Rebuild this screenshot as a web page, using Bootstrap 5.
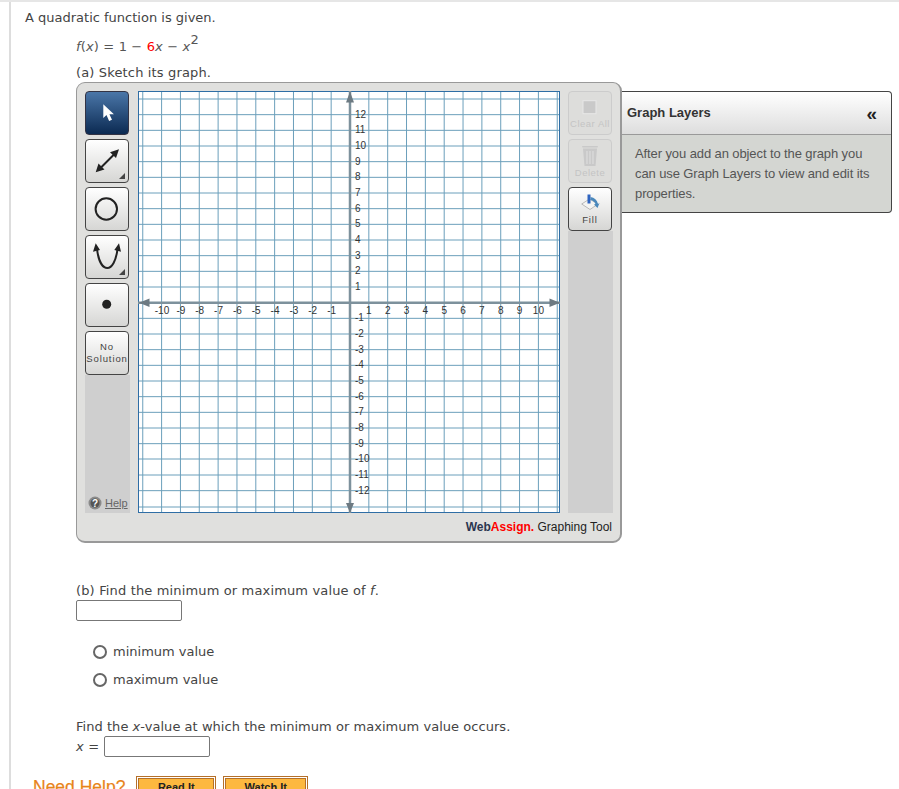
<!DOCTYPE html>
<html lang="en">
<head>
<meta charset="utf-8">
<title>Quadratic function</title>
<link href="https://cdn.jsdelivr.net/npm/bootstrap@5.3.0/dist/css/bootstrap.min.css" rel="stylesheet">
<style>
html,body{height:789px;overflow:hidden;background:#fff}
body{border-top:2px solid #e6e6e6;font-family:"DejaVu Sans",sans-serif;font-size:13px;color:#444}
.qpane{margin-left:9px;border-left:2px solid #ddd;height:800px;padding-left:14px}
.qline{margin:0;line-height:16px}
.qintro{padding-top:8px}
.qindent{margin-left:51px;letter-spacing:.15px}
.qformula{margin-top:10px;line-height:22px;color:#555}
.qformula sup{font-size:13px;top:-.55em;line-height:0}
.qred{color:#f00}
.qpart{margin-top:7px}
.gbox{width:546px;height:461px;margin-top:1px;padding:8px 8px 0 8px;background:#e0e0de;border:1px solid #999;border-width:1px 2px 2px 1px;border-radius:9px;flex:none;letter-spacing:0}
.gmain{height:422px}
.gcol{width:45px;flex:none}
.gfill{flex:1 1 auto;background:#cfcfcf}
.gbtn{width:44px;height:44px;padding:0;border:1px solid #444;border-radius:4px;background:linear-gradient(#fff,#d6d6d4);font-family:"Liberation Sans",sans-serif;font-size:9.5px;letter-spacing:.9px;line-height:12px;color:#444}
.gbtn:hover{background:linear-gradient(#fff,#d6d6d4);border-color:#444;color:#444}
.gbtn svg{display:block}
.gbtn-on,.gbtn-on:hover{background:linear-gradient(#4a76a8,#0b2a52);border-color:#334}
.gbtn-lab{padding-bottom:3px}
.gbtn-del{padding-bottom:2px}
.gbtn-off,.gbtn-off:disabled{border-color:#ccc;background:#dddddb;color:#c4c4c4;opacity:1;letter-spacing:.5px}
.gbtn-cap{white-space:nowrap;display:block;margin-top:-1px}
.ghelp{font-family:"Liberation Sans",sans-serif;font-size:11px;color:#666;padding:0 0 2px 3px;background:#cfcfcf;gap:3px}
.ghelp a{color:#666}
.gsvg{display:block;width:422px;height:422px;margin:0 8px;flex:none;background:#fff}
.gsvg text{font-family:"Liberation Sans",sans-serif;font-size:10px;fill:#333}
.gsvg .gl{stroke:#6b9fbb;stroke-width:1}
.gfoot{font-family:"Liberation Sans",sans-serif;font-size:12px;text-align:right;color:#222;line-height:16px;padding:6px 0 0 0}
.gfoot b{color:#2b3650}
.gfoot b i{color:#f00;font-style:normal}
.lpanel{width:270px;height:122px;margin-top:10px;border:1px solid #444;border-left:0;border-radius:0 4px 4px 0;background:#d4d6d2;font-family:"Liberation Sans",sans-serif;flex:none;letter-spacing:0}
.lhead{height:43px;padding:0 14px 0 5px;background:linear-gradient(#fff,#ddd);border-bottom:1px solid #999;font-size:13px;font-weight:700;color:#333;border-radius:0 4px 0 0}
.lchev{font-size:19px;color:#222;line-height:1}
.lbody{font-size:13px;letter-spacing:-.1px;line-height:20px;color:#555;padding:9px 12px 0 13px}
.qfind{margin-top:40px}
.qfield{display:block;width:106px;height:21px;border:1px solid #777;border-radius:2px;background:#fff}
.qfield-a{margin-top:1px}
.qopts{margin:17px 0 0 68px}
.qopt{height:28px;display:flex;align-items:center;gap:6px;margin:0}
.qradio{width:14px;height:14px;margin:0;border:2px solid #666;flex:none}
.qfindx{margin-top:25px;letter-spacing:.04px}
.qxrow{gap:5px;margin-top:1px}
.qhelp{margin:19px 0 0 8px;gap:11px}
.qhelp-t{font-family:"Liberation Sans",sans-serif;font-size:17.5px;color:#e8841a;line-height:22px;-webkit-text-stroke:.2px #e8841a}
.qhelp-x{margin-left:-4px}
.qhelp-b{width:auto;height:22px;padding:1px;border:1px solid #b5702a;border-radius:0;background:#fff;line-height:1}
.qhelp-b span{display:block;height:18px;border:1px solid #b5702a;background:#fdb83f;font-family:"Liberation Sans",sans-serif;font-size:11px;font-weight:700;color:#222;line-height:16px;padding:0 18.5px}
</style>
</head>
<body>
<div class="qpane">
  <p class="qline qintro">A quadratic function is given.</p>
  <p class="qline qindent qformula"><i>f</i>(<i>x</i>) = 1 &minus; <span class="qred">6</span><i>x</i> &minus; <i>x</i><sup>2</sup></p>
  <p class="qline qindent qpart">(a) Sketch its graph.</p>
  <div class="d-flex qindent">
    <div class="gbox">
      <div class="d-flex gmain">
        <div class="gcol d-flex flex-column">
          <div class="d-flex flex-column gap-1">
            <button type="button" class="btn gbtn gbtn-on" aria-label="Pointer"><svg width="42" height="42" viewBox="0 0 42 42"><path d="M17.3 12.3V26l3.2-3 2.6 6 2.9-1.2-2.6-5.6h4.5z" fill="#fff"/></svg></button>
            <button type="button" class="btn gbtn" aria-label="Line"><svg width="42" height="42" viewBox="0 0 42 42"><path d="M13 29.500 30 12.500" stroke="#222" stroke-width="2"/><path d="M9.700 32.300 12.500 23.500 18.500 29.500zM33 9.300 30 18 24 12.200z" fill="#222"/><path d="M39 33v6h-6z" fill="#444"/></svg></button>
            <button type="button" class="btn gbtn" aria-label="Circle"><svg width="42" height="42" viewBox="0 0 42 42"><circle cx="20.300" cy="21" r="10.700" fill="none" stroke="#222" stroke-width="2"/></svg></button>
            <button type="button" class="btn gbtn" aria-label="Parabola"><svg width="42" height="42" viewBox="0 0 42 42"><path d="M11 13C12.500 25 16.500 32 21.300 32 26 32 30 25 31.500 13" fill="none" stroke="#222" stroke-width="2"/><path d="M9.700 7.300 7 15.700 14 14zM33 7.300 28.300 14 35 15.700z" fill="#222"/><path d="M39 33v6h-6z" fill="#444"/></svg></button>
            <button type="button" class="btn gbtn" aria-label="Point"><svg width="42" height="42" viewBox="0 0 42 42"><circle cx="20.700" cy="20.300" r="4.500" fill="#222"/></svg></button>
            <button type="button" class="btn gbtn">No<br>Solution</button>
          </div>
          <div class="gfill"></div>
          <div class="ghelp d-flex align-items-center">
            <svg width="14" height="14" viewBox="0 0 14 14" aria-hidden="true"><circle cx="7" cy="7" r="6.500" fill="#8a8a8a"/><circle cx="7" cy="7" r="4.500" fill="#555"/><text x="7" y="10.500" text-anchor="middle" fill="#fff" font-size="10" font-weight="700" font-family="Liberation Sans">?</text></svg>
            <a href="#">Help</a>
          </div>
        </div>
        <svg class="gsvg" viewBox="0 0 422 422" role="img" aria-label="Coordinate grid">
          <g class="gls">
            <line class="gl" x1="4.76" x2="4.76" y1="0" y2="422"/><line class="gl" x1="23.6" x2="23.6" y1="0" y2="422"/><line class="gl" x1="42.44" x2="42.44" y1="0" y2="422"/><line class="gl" x1="61.28" x2="61.28" y1="0" y2="422"/><line class="gl" x1="80.12" x2="80.12" y1="0" y2="422"/><line class="gl" x1="98.96" x2="98.96" y1="0" y2="422"/><line class="gl" x1="117.8" x2="117.8" y1="0" y2="422"/><line class="gl" x1="136.64" x2="136.64" y1="0" y2="422"/><line class="gl" x1="155.48" x2="155.48" y1="0" y2="422"/><line class="gl" x1="174.32" x2="174.32" y1="0" y2="422"/><line class="gl" x1="193.16" x2="193.16" y1="0" y2="422"/><line class="gl" x1="230.84" x2="230.84" y1="0" y2="422"/><line class="gl" x1="249.68" x2="249.68" y1="0" y2="422"/><line class="gl" x1="268.52" x2="268.52" y1="0" y2="422"/><line class="gl" x1="287.36" x2="287.36" y1="0" y2="422"/><line class="gl" x1="306.2" x2="306.2" y1="0" y2="422"/><line class="gl" x1="325.04" x2="325.04" y1="0" y2="422"/><line class="gl" x1="343.88" x2="343.88" y1="0" y2="422"/><line class="gl" x1="362.72" x2="362.72" y1="0" y2="422"/><line class="gl" x1="381.56" x2="381.56" y1="0" y2="422"/><line class="gl" x1="400.4" x2="400.4" y1="0" y2="422"/><line class="gl" x1="419.24" x2="419.24" y1="0" y2="422"/>
            <line class="gl" y1="8" y2="8" x1="0" x2="422"/><line class="gl" y1="23.67" y2="23.67" x1="0" x2="422"/><line class="gl" y1="39.33" y2="39.33" x1="0" x2="422"/><line class="gl" y1="55" y2="55" x1="0" x2="422"/><line class="gl" y1="70.67" y2="70.67" x1="0" x2="422"/><line class="gl" y1="86.33" y2="86.33" x1="0" x2="422"/><line class="gl" y1="102" y2="102" x1="0" x2="422"/><line class="gl" y1="117.67" y2="117.67" x1="0" x2="422"/><line class="gl" y1="133.33" y2="133.33" x1="0" x2="422"/><line class="gl" y1="149" y2="149" x1="0" x2="422"/><line class="gl" y1="164.67" y2="164.67" x1="0" x2="422"/><line class="gl" y1="180.33" y2="180.33" x1="0" x2="422"/><line class="gl" y1="196" y2="196" x1="0" x2="422"/><line class="gl" y1="227.33" y2="227.33" x1="0" x2="422"/><line class="gl" y1="243" y2="243" x1="0" x2="422"/><line class="gl" y1="258.67" y2="258.67" x1="0" x2="422"/><line class="gl" y1="274.33" y2="274.33" x1="0" x2="422"/><line class="gl" y1="290" y2="290" x1="0" x2="422"/><line class="gl" y1="305.67" y2="305.67" x1="0" x2="422"/><line class="gl" y1="321.33" y2="321.33" x1="0" x2="422"/><line class="gl" y1="337" y2="337" x1="0" x2="422"/><line class="gl" y1="352.67" y2="352.67" x1="0" x2="422"/><line class="gl" y1="368" y2="368" x1="0" x2="422"/><line class="gl" y1="384" y2="384" x1="0" x2="422"/><line class="gl" y1="399.67" y2="399.67" x1="0" x2="422"/><line class="gl" y1="416" y2="416" x1="0" x2="422"/>
          </g>
          <rect x=".5" y=".5" width="421" height="421" fill="none" stroke="#2f6ea5"/>
          <path d="M0 211.700H422M212 0V422" stroke="#7d919c" stroke-width="2.500" fill="none"/>
          <path d="M1 211.700 11.500 207.500V216zM422 211.700 411.500 207.500V216zM212 0.500 208 11.500H216zM212 422 208 412H216z" fill="#6d7a82"/>
          <g text-anchor="middle">
            <text x="24" y="222.500">-10</text><text x="42.900" y="222.500">-9</text><text x="61.700" y="222.500">-8</text><text x="80.500" y="222.500">-7</text><text x="99.400" y="222.500">-6</text><text x="118.200" y="222.500">-5</text><text x="137" y="222.500">-4</text><text x="155.900" y="222.500">-3</text><text x="174.700" y="222.500">-2</text><text x="193.600" y="222.500">-1</text>
            <text x="230.800" y="222.500">1</text><text x="249.700" y="222.500">2</text><text x="268.500" y="222.500">3</text><text x="287.400" y="222.500">4</text><text x="306.200" y="222.500">5</text><text x="325" y="222.500">6</text><text x="343.900" y="222.500">7</text><text x="362.700" y="222.500">8</text><text x="381.600" y="222.500">9</text><text x="400.400" y="222.500">10</text>
          </g>
          <g>
            <text x="217" y="26.700">12</text><text x="217" y="42.300">11</text><text x="217" y="58">10</text><text x="217" y="73.700">9</text><text x="217" y="89.300">8</text><text x="217" y="105">7</text><text x="217" y="120.700">6</text><text x="217" y="136.300">5</text><text x="217" y="152">4</text><text x="217" y="167.700">3</text><text x="217" y="183.300">2</text><text x="217" y="199">1</text>
            <text x="217" y="230.300">-1</text><text x="217" y="246">-2</text><text x="217" y="261.700">-3</text><text x="217" y="277.300">-4</text><text x="217" y="293">-5</text><text x="217" y="308.700">-6</text><text x="217" y="324.300">-7</text><text x="217" y="340">-8</text><text x="217" y="355.700">-9</text><text x="217" y="371.300">-10</text><text x="217" y="387">-11</text><text x="217" y="402.700">-12</text>
          </g>
        </svg>
        <div class="gcol d-flex flex-column">
          <div class="d-flex flex-column gap-1">
            <button type="button" class="btn gbtn gbtn-off gbtn-lab" disabled><svg width="42" height="26" viewBox="0 0 42 26"><rect x="14" y="7.700" width="13" height="13" fill="#c9c9c9" stroke="#e8e8e8"/></svg><span class="gbtn-cap">Clear All</span></button>
            <button type="button" class="btn gbtn gbtn-off gbtn-del" disabled><svg width="42" height="26" viewBox="0 0 42 26"><path d="M13 4 29 4 28.500 5.500H13.500zM14 6.500H28L26.500 24H15.500z" fill="#c9c9c9"/><path d="M18 9V22M21 9V22M24 9V22" stroke="#e0e0e0"/></svg><span class="gbtn-cap">Delete</span></button>
            <button type="button" class="btn gbtn gbtn-lab"><svg width="42" height="26" viewBox="0 0 42 26"><path d="M12.700 15 20.500 10 29 15 21 20.500z" fill="#f4f4f2" stroke="#aaa" stroke-width=".8"/><path d="M18.500 5.500h3v9h-3z" fill="#2f64c0"/><path d="M21.500 8c4 .5 6.500 3 7.500 7l1.500-1-2 5-3.500-3.500 1.500-.5c-.8-2-2.500-3.500-5-4z" fill="#4a88bb"/></svg><span class="gbtn-cap">Fill</span></button>
          </div>
          <div class="gfill"></div>
        </div>
      </div>
      <div class="gfoot"><b>Web<i>Assign.</i></b> Graphing Tool</div>
    </div>
    <div class="lpanel">
      <div class="lhead d-flex align-items-center justify-content-between"><span>Graph Layers</span><span class="lchev">&laquo;</span></div>
      <div class="lbody">After you add an object to the graph you can use Graph Layers to view and edit its properties.</div>
    </div>
  </div>
  <p class="qline qindent qfind">(b) Find the minimum or maximum value of <i>f</i>.</p>
  <div class="qindent"><input class="qfield qfield-a" type="text" aria-label="Value"></div>
  <div class="qopts">
    <label class="qopt"><input class="form-check-input qradio" type="radio" name="mm">minimum value</label>
    <label class="qopt"><input class="form-check-input qradio" type="radio" name="mm">maximum value</label>
  </div>
  <p class="qline qindent qfindx">Find the <i>x</i>-value at which the minimum or maximum value occurs.</p>
  <div class="qindent d-flex align-items-center qxrow"><span><i>x</i> =</span><input class="qfield" type="text" aria-label="x"></div>
  <div class="d-flex align-items-start qhelp">
    <span class="qhelp-t">Need Help?</span>
    <button type="button" class="btn qhelp-b"><span>Read It</span></button>
    <button type="button" class="btn qhelp-b qhelp-x"><span>Watch It</span></button>
  </div>
</div>
</body>
</html>
